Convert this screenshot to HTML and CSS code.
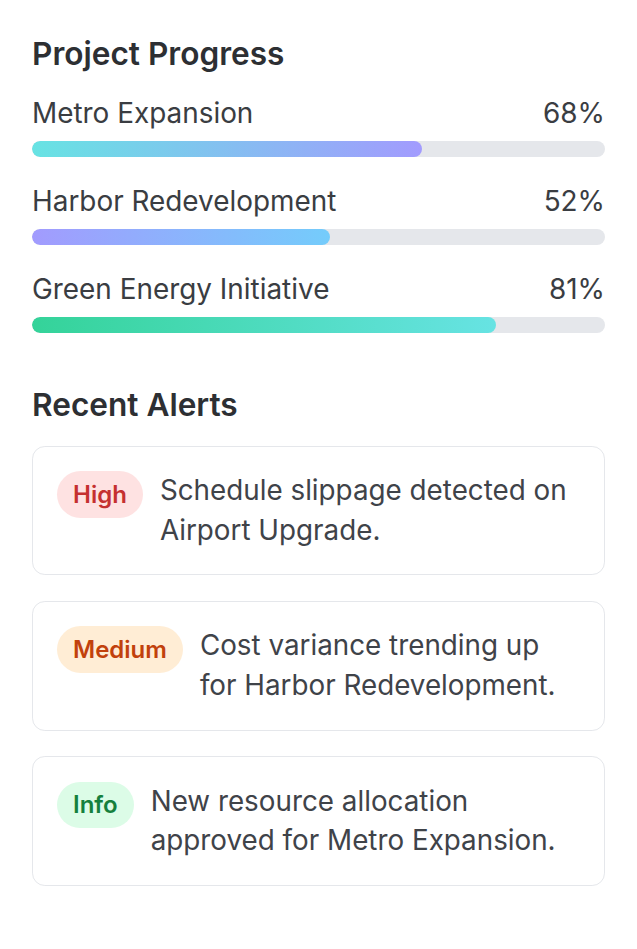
FILE: index.html
```html
<!DOCTYPE html>
<html lang="en">
<head>
<meta charset="utf-8">
<title>Dashboard</title>
<link rel="stylesheet" href="styles.css">
</head>
<body>
<main class="panel">
  <section class="section">
    <h2 class="section-title">Project Progress</h2>
    <div class="progress-list">
      <div class="progress-item">
        <div class="progress-head"><span>Metro Expansion</span><span>68%</span></div>
        <div class="track"><div class="fill fill-metro" style="width:68%"></div></div>
      </div>
      <div class="progress-item">
        <div class="progress-head"><span>Harbor Redevelopment</span><span>52%</span></div>
        <div class="track"><div class="fill fill-harbor" style="width:52%"></div></div>
      </div>
      <div class="progress-item">
        <div class="progress-head"><span>Green Energy Initiative</span><span>81%</span></div>
        <div class="track"><div class="fill fill-green" style="width:81%"></div></div>
      </div>
    </div>
  </section>
  <section class="section">
    <h2 class="section-title">Recent Alerts</h2>
    <div class="alert-list">
      <div class="alert">
        <span class="badge badge-high">High</span>
        <p class="alert-text">Schedule slippage detected on Airport Upgrade.</p>
      </div>
      <div class="alert">
        <span class="badge badge-medium">Medium</span>
        <p class="alert-text">Cost variance trending up for Harbor Redevelopment.</p>
      </div>
      <div class="alert">
        <span class="badge badge-info">Info</span>
        <p class="alert-text">New resource allocation approved for Metro Expansion.</p>
      </div>
    </div>
  </section>
</main>
</body>
</html>
```
FILE: styles.css
```css
* { box-sizing: border-box; }
html, body { margin: 0; padding: 0; background: #ffffff; }
body {
  font-family: Inter, "Liberation Sans", sans-serif;
  color: #3a3d42;
}
.panel {
  padding: 32px 32px;
  display: flex;
  flex-direction: column;
  gap: 50.6px;
}
.section-title {
  margin: 0 0 19.2px 0;
  font-size: 31.6px;
  line-height: 43.2px;
  font-weight: 600;
  color: #2d2f33;
}
.progress-list {
  display: flex;
  flex-direction: column;
  gap: 25.6px;
}
.progress-head {
  display: flex;
  justify-content: space-between;
  font-size: 27.9px;
  line-height: 38.4px;
  margin-bottom: 8px;
}
.track {
  height: 16px;
  border-radius: 8px;
  background: #e5e7eb;
  overflow: hidden;
}
.fill { height: 100%; border-radius: 8px; }
.fill-metro { background: linear-gradient(90deg, #67e3e3, #a29bfe); }
.fill-harbor { background: linear-gradient(90deg, #a29bfe, #74ccfb); }
.fill-green { background: linear-gradient(90deg, #34d399, #67e3e3); }
.alert-list {
  display: flex;
  flex-direction: column;
  gap: 25.6px;
}
.alert {
  display: flex;
  align-items: flex-start;
  gap: 17px;
  border: 1px solid #e5e7eb;
  border-radius: 12.8px;
  padding: 24.4px 24px;
}
.badge {
  flex: none;
  font-size: 24px;
  line-height: 33.6px;
  font-weight: 600;
  padding: 6.4px 16px;
  border-radius: 999px;
}
.badge-high { background: #fee2e2; color: #c53030; }
.badge-medium { background: #ffedd5; color: #c2410c; }
.badge-info { background: #dcfce7; color: #15803d; }
.alert-text {
  margin: 0;
  font-size: 27.8px;
  line-height: 39.4px;
  color: #3f4349;
}
```
